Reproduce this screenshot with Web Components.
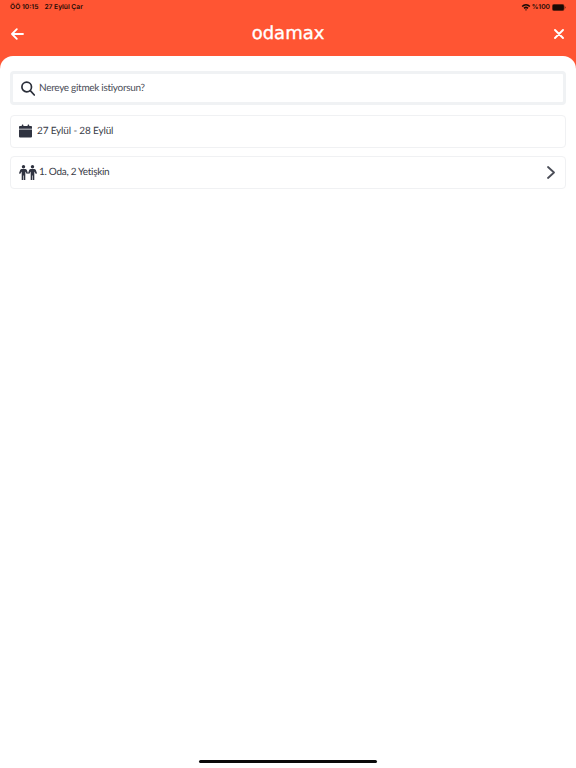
<!DOCTYPE html>
<html lang="tr"><head><meta charset="utf-8"><title>odamax</title>
<style>
html,body{margin:0;padding:0;height:768px;overflow:hidden;background:#fff}
</style></head><body>
<app-screen>
  <status-bar slot="top"></status-bar>
  <nav-bar slot="top"></nav-bar>
  <search-box placeholder="Nereye gitmek istiyorsun?"></search-box>
  <info-row icon="calendar" gap="5" track="-.15">27 Eylül - 28 Eylül</info-row>
  <info-row icon="people" gap="2" track="-.3" chevron>1. Oda, 2 Yetişkin</info-row>
</app-screen>
<script>
const def=(name,css,html)=>customElements.define(name,class extends HTMLElement{
  connectedCallback(){ if(this.shadowRoot)return; const r=this.attachShadow({mode:'open'}); r.innerHTML=`<style>${css}</style>${typeof html==='function'?html(this):html}`; }
});
const FONT=`"Lato","Noto Sans",sans-serif`;
def('app-screen',`
:host{display:flex;flex-direction:column;width:576px;height:768px;background:#ff5533;font-family:${FONT};position:relative;overflow:hidden;text-rendering:geometricPrecision}
.sheet{flex:1;background:#fff;border-radius:13px 13px 0 0;padding:15px 10px 0;display:flex;flex-direction:column;gap:8px}
.home{position:absolute;left:199px;bottom:5px;width:178px;height:3px;border-radius:2px;background:#0a0a0a}
`,`<slot name="top"></slot><div class="sheet"><slot></slot></div><div class="home"></div>`);
def('status-bar',`
:host{display:flex;justify-content:space-between;align-items:center;height:14px;padding:0 10px;font:600 6.700px/14px Inter,"Liberation Sans",sans-serif;color:#1a0a05}
.l{display:flex;gap:6px}.r{display:flex;align-items:center;gap:1px}
svg{display:block}
`,`<div class="l"><span>ÖÖ 10:15</span><span>27 Eylül Çar</span></div>
<div class="r"><svg width="10" height="8" viewBox="0 0 10 8"><path d="M.6 2.9A6.3 6.3 0 0 1 9.4 2.9L8.3 4A4.8 4.8 0 0 0 1.7 4Z M2.500 4.800A3.500 3.500 0 0 1 7.500 4.800L6.400 5.900A2 2 0 0 0 3.600 5.900Z M4.100 6.700A1.300 1.300 0 0 1 5.900 6.700L5 7.700Z" fill="#1a0a05"/></svg><span>%100</span>
<svg width="14" height="7" viewBox="0 0 14 7" style="margin-left:1px"><rect x=".3" y=".3" width="11.800" height="6.400" rx="1.800" fill="#1a0a05" stroke="#7a2a18" stroke-width=".6"/><path d="M12.800 2.400c.6.1 1 .5 1 1.100s-.4 1-1 1.100Z" fill="#7a2a18"/></svg></div>`);
def('nav-bar',`
:host{display:flex;align-items:center;justify-content:space-between;box-sizing:border-box;height:42px;padding:0 12px 3px 11px;position:relative}
svg{display:block}
.logo{position:absolute;left:0;right:0;top:7px;text-align:center;font:500 18px/26px "DejaVu Sans",sans-serif;color:#fff;-webkit-text-stroke:.35px #fff}
`,`<svg width="13" height="12" viewBox="0 0 13 12" fill="none" stroke="#fff" stroke-width="1.8" stroke-linecap="round" stroke-linejoin="round"><path d="M12 6H1.200M5.800 1.200 1 6l4.800 4.800"/></svg>
<div class="logo">odamax</div>
<svg width="10" height="10" viewBox="0 0 10 10" fill="none" stroke="#fff" stroke-width="1.900" stroke-linecap="round"><path d="M1 1l8 8M9 1 1 9"/></svg>`);
def('search-box',`
:host{display:flex;align-items:center;box-sizing:border-box;height:34px;border:3px solid #f0f2f4;border-radius:4px;padding:0 0 0 8px;color:#4a4d57;font-size:10px;letter-spacing:-.3px;margin-bottom:2px}
svg{margin-right:4px;display:block}
`,h=>`<svg width="14" height="15" viewBox="0 0 14 15" fill="none" stroke="#2b2f3a" stroke-width="1.700" stroke-linecap="round"><circle cx="5.700" cy="6" r="4.800"/><path d="M9.300 9.700 13.300 14"/></svg><span>${h.getAttribute('placeholder')}</span>`);
const fig=`M2.800 4h3.400a1.700 1.700 0 0 1 1.600 1L9 8.300 7.900 9 6.300 6.500V15H4.800V10.500H4.200V15H2.700V6.500L1.100 9 0 8.300 1.200 5A1.700 1.700 0 0 1 2.800 4Z`;
const icons={calendar:`<svg width="13" height="14" viewBox="0 0 14 14" fill="#2f3340"><rect x="3" y="0" width="1.700" height="3" rx=".5"/><rect x="9.300" y="0" width="1.700" height="3" rx=".5"/><path d="M1 1.500H13a1 1 0 0 1 1 1V4.700H0V2.500a1 1 0 0 1 1-1ZM0 5.500h14v7.300a1.200 1.200 0 0 1-1.200 1.200H1.200A1.200 1.200 0 0 1 0 12.800Z"/></svg>`,
people:`<svg width="18" height="15" viewBox="0 0 18 15" fill="#2f3340"><circle cx="4.500" cy="1.700" r="1.700"/><circle cx="13.500" cy="1.700" r="1.700"/><path d="${fig}"/><path transform="translate(9)" d="${fig}"/></svg>`};
def('info-row',`
:host{display:flex;align-items:center;box-sizing:border-box;height:33px;border:1px solid #f0f1f3;border-radius:4px;padding:0 10px 1px 8px;color:#3a3d48;font-size:10px}
svg{display:block;flex:none}
.t{flex:1}
`,h=>`${icons[h.getAttribute('icon')]}<span class="t" style="margin-left:${h.getAttribute('gap')}px;letter-spacing:${h.getAttribute('track')}px"><slot></slot></span>${h.hasAttribute('chevron')?'<svg width="8" height="13" viewBox="0 0 8 13" fill="none" stroke="#4a4d57" stroke-width="1.800" stroke-linecap="round" stroke-linejoin="round"><path d="M1 1l6 5.500L1 12"/></svg>':''}`);
</script>
</body></html>
